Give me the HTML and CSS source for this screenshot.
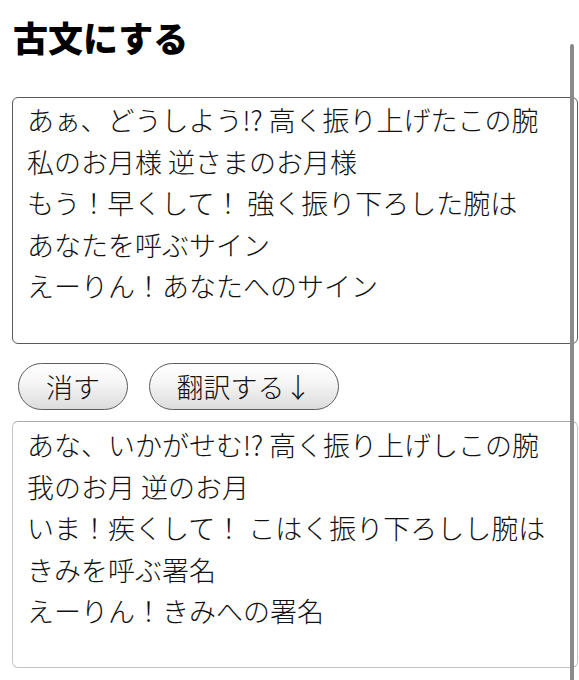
FILE: index.html
```html
<!DOCTYPE html>
<html lang="ja">
<head>
<meta charset="utf-8">
<title>古文にする</title>
<link rel="stylesheet" href="styles.css">
</head>
<body>
<div class="page">
  <h1 class="title">古文にする</h1>
  <div class="box box-input">
    <div class="line">あぁ、どうしよう!? 高く振り上げたこの腕</div>
    <div class="line">私のお月様 逆さまのお月様</div>
    <div class="line">もう！早くして！ 強く振り下ろした腕は</div>
    <div class="line">あなたを呼ぶサイン</div>
    <div class="line">えーりん！あなたへのサイン</div>
  </div>
  <div class="actions">
    <button class="btn btn-clear">消す</button>
    <button class="btn btn-translate">翻訳する↓</button>
  </div>
  <div class="box box-output">
    <div class="line">あな、いかがせむ!? 高く振り上げしこの腕</div>
    <div class="line">我のお月 逆のお月</div>
    <div class="line">いま！疾くして！ こはく振り下ろしし腕は</div>
    <div class="line">きみを呼ぶ署名</div>
    <div class="line">えーりん！きみへの署名</div>
  </div>
</div>
<div class="scroll-indicator"></div>
</body>
</html>
```

FILE: styles.css
```css
html, body {
  margin: 0;
  padding: 0;
  background: #fff;
  overflow: hidden;
}
body {
  width: 579px;
  height: 680px;
  position: relative;
  font-family: "Noto Sans CJK JP", "Noto Sans", sans-serif;
  color: #111;
}
.page {
  padding: 17px 0 0 12px;
}
.title {
  margin: 0 0 0 1px;
  font-size: 35px;
  line-height: 40px;
  font-weight: 900;
  color: #000;
}
.box {
  box-sizing: border-box;
  width: 566px;
  height: 247px;
  border-radius: 6px;
  padding: 1px 0 0 14px;
  font-size: 27px;
  font-weight: 300;
  line-height: 41.5px;
  color: #111;
  white-space: nowrap;
}
.box-input {
  margin-top: 40px;
  border: 1px solid #5a5a5a;
}
.box-output {
  margin-top: 11px;
  padding-top: 2px;
  border: 1px solid #c4c4c4;
  border-top-color: #aaa;
}
.actions {
  display: flex;
  gap: 21px;
  margin-top: 19px;
  padding-left: 6px;
}
.btn {
  box-sizing: border-box;
  height: 47px;
  border: 1px solid #5c5c5c;
  border-radius: 24px;
  background: linear-gradient(#ffffff 0%, #f6f6f6 40%, #dcdcdc 100%);
  font-family: "Noto Sans CJK JP", "Noto Sans", sans-serif;
  font-size: 27px;
  font-weight: 300;
  line-height: 1;
  color: #111;
  padding: 0;
  display: flex;
  align-items: center;
  justify-content: center;
}
.btn-clear {
  width: 110px;
}
.btn-translate {
  width: 190px;
}
.scroll-indicator {
  position: absolute;
  left: 570px;
  top: 44px;
  width: 4px;
  bottom: 0;
  background: #8a8a8a;
  border-radius: 2px 2px 0 0;
}
```
